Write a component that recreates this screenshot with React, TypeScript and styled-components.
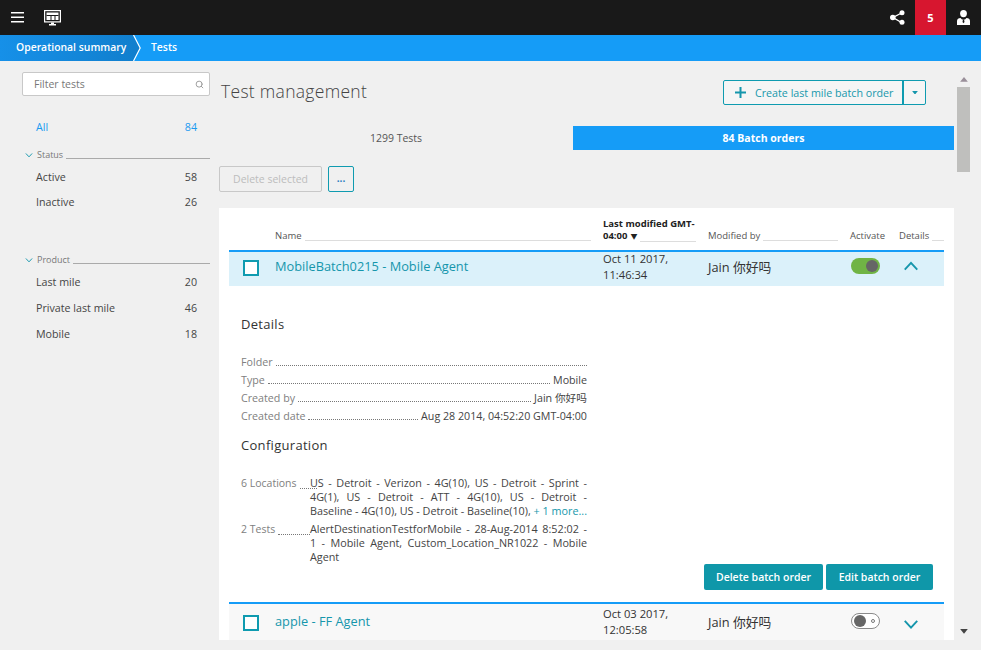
import styled, { createGlobalStyle } from "styled-components";
import { Search } from "lucide-react";

const FONT = `"Open Sans", "Noto Sans CJK SC", sans-serif`;
const COLS = "46px 328px 105px 142px 49px 45px";

const GlobalStyle = createGlobalStyle`
  html, body { margin: 0; padding: 0; background: #f0f0f0; }
  * { box-sizing: border-box; }
  body { font-family: ${FONT}; font-size: 11px; color: #333; }
`;

const Page = styled.div`
  width: 981px;
  height: 650px;
  overflow: hidden;
  display: flex;
  flex-direction: column;
`;

const TopBar = styled.header`
  height: 35px;
  flex: none;
  background: #191919;
  display: flex;
  align-items: center;
  padding-left: 11px;
  color: #fff;
`;

const MonitorSlot = styled.span`
  margin-left: 20px;
  display: flex;
`;

const TopRight = styled.div`
  margin-left: auto;
  display: flex;
  align-items: center;
  height: 100%;
`;

const ShareSlot = styled.span`
  display: flex;
  margin-right: 10px;
`;

const Badge = styled.div`
  width: 31px;
  height: 35px;
  background: #d7162f;
  display: flex;
  align-items: center;
  justify-content: center;
  font-size: 11px;
  font-weight: 700;
`;

const UserSlot = styled.span`
  width: 35px;
  display: flex;
  justify-content: center;
`;

const Crumbs = styled.nav`
  height: 26px;
  flex: none;
  background: #159cf7;
  display: flex;
  align-items: center;
  color: #fff;
  font-size: 10.4px;
  font-weight: 600;
`;

const CrumbCurrent = styled.div`
  height: 100%;
  display: flex;
  align-items: center;
  padding: 0 0 2px 16px;
  background: linear-gradient(90deg, #1690e8, #117fce);
  width: 133px;
`;

const CrumbLast = styled.span`
  margin: 0 0 2px 10px;
`;

const Body = styled.div`
  flex: 1;
  min-height: 0;
  display: flex;
`;

const Sidebar = styled.aside`
  width: 219px;
  flex: none;
  padding: 11px 9px 0 22px;
`;

const FilterBox = styled.div`
  height: 24px;
  background: #fff;
  border: 1px solid #c8c8c8;
  border-radius: 2px;
  display: flex;
  align-items: center;
  justify-content: space-between;
  padding: 0 5px 0 11px;
  color: #777;
  font-size: 10.5px;
`;

const FilterRow = styled.div<{ $active?: boolean; $tall?: boolean }>`
  display: flex;
  justify-content: space-between;
  align-items: center;
  height: ${(p) => (p.$tall ? "26px" : "25px")};
  padding: 0 13px 0 14px;
  font-size: 10.7px;
  color: ${(p) => (p.$active ? "#1a9bf0" : "#454545")};
`;

const AllGroup = styled.div`
  margin-top: 18px;
  margin-bottom: 8px;
`;

const GroupHead = styled.div`
  display: flex;
  align-items: flex-end;
  height: 14px;
  color: #787878;
  font-size: 9px;
  margin-bottom: 3px;
  svg {
    margin: 0 4px 3px 3px;
  }
`;

const GroupRule = styled.span`
  flex: 1;
  height: 1px;
  background: #aaa;
  margin: 0 0 2px 3px;
`;

const FilterGroup = styled.div`
  margin-bottom: 38px;
`;

const Main = styled.main`
  width: 735px;
  flex: none;
  display: flex;
  flex-direction: column;
`;

const TitleRow = styled.div`
  height: 65px;
  flex: none;
  display: flex;
  align-items: flex-start;
  justify-content: space-between;
  padding: 19px 28px 0 2px;
`;

const Title = styled.h1`
  margin: -1px 0 0;
  font-size: 17.5px;
  line-height: 24px;
  font-weight: 300;
  color: #444;
  letter-spacing: 0.3px;
`;

const SplitButton = styled.div`
  height: 25px;
  border: 1px solid #0f9bb0;
  border-radius: 2px;
  display: flex;
  align-items: center;
  color: #1798ac;
  font-size: 10.7px;
  background: #f5f5f5;
`;

const SplitMain = styled.div`
  width: 180px;
  height: 100%;
  display: flex;
  align-items: center;
  padding-left: 11px;
  gap: 9px;
  border-right: 2px solid #0f9bb0;
`;

const SplitCaret = styled.div`
  width: 21px;
  display: flex;
  justify-content: center;
`;

const Tabs = styled.div`
  display: flex;
  height: 24px;
  flex: none;
`;

const Tab = styled.div<{ $active?: boolean }>`
  width: ${(p) => (p.$active ? "381px" : "354px")};
  display: flex;
  align-items: center;
  justify-content: center;
  font-size: 10.5px;
  font-weight: ${(p) => (p.$active ? 700 : 400)};
  color: ${(p) => (p.$active ? "#fff" : "#555")};
  background: ${(p) => (p.$active ? "#159cf7" : "transparent")};
`;

const Actions = styled.div`
  display: flex;
  gap: 6px;
  margin: 16px 0;
  flex: none;
`;

const DisabledButton = styled.div`
  width: 103px;
  height: 26px;
  border: 1px solid #c8c8c8;
  border-radius: 2px;
  color: #bdbdbd;
  font-size: 10.5px;
  display: flex;
  align-items: center;
  justify-content: center;
`;

const MoreButton = styled.div`
  width: 26px;
  height: 26px;
  border: 1px solid #0f9bb0;
  border-radius: 2px;
  color: #2a7fc0;
  font-weight: 700;
  font-size: 10px;
  display: flex;
  align-items: center;
  justify-content: center;
  padding-bottom: 3px;
`;

const Card = styled.section`
  background: #fff;
  height: 432px;
  flex: none;
  padding: 0 10px;
  overflow: hidden;
`;

const HeadRow = styled.div`
  display: grid;
  grid-template-columns: ${COLS};
  height: 42px;
  padding-bottom: 8px;
  align-items: end;
`;

const HeadCell = styled.div<{ $gap?: string }>`
  display: flex;
  align-items: flex-end;
  font-size: 9.5px;
  line-height: 12px;
  color: #555;
  padding-right: ${(p) => p.$gap || "0"};
`;

const SortCell = styled.div`
  font-size: 9.5px;
  line-height: 12px;
  font-weight: 700;
  color: #222;
  padding-right: 12px;
  white-space: nowrap;
  margin-bottom: -1px;
  ${HeadCell} {
    color: #222;
  }
`;

const SortMark = styled.span`
  font-size: 7px;
  margin-left: 3px;
`;

const HeadLabel = styled.span`
  flex: none;
  white-space: nowrap;
`;

const HeadRule = styled.span`
  flex: 1;
  height: 1px;
  background: #ddd;
  margin: 0 0 1px 3px;
`;

const Row = styled.div<{ $open?: boolean }>`
  display: grid;
  grid-template-columns: ${COLS};
  grid-template-rows: minmax(0, 1fr);
  height: ${(p) => (p.$open ? "36px" : "38px")};
  align-items: center;
  border-top: 2px solid #159cf7;
  padding-bottom: ${(p) => (p.$open ? "6px" : "2px")};
  background: ${(p) => (p.$open ? "#dbf1fa" : "#f8f8f8")};
`;

const CheckBox = styled.span`
  width: 16px;
  height: 16px;
  border: 2px solid #0f9bb0;
  background: #fff;
  margin: 3px 0 0 14px;
`;

const RowName = styled.div`
  color: #1596ac;
  font-size: 12.8px;
  font-weight: 500;
`;

const RowDate = styled.div`
  font-size: 11.2px;
  line-height: 16.5px;
  font-weight: 500;
  color: #333;
  margin-top: 2px;
`;

const RowOwner = styled.div`
  font-size: 12.8px;
  color: #333;
  margin-top: 1px;
`;

const Toggle = styled.span<{ $on?: boolean }>`
  width: 29px;
  height: 16px;
  border-radius: 8px;
  display: flex;
  align-items: center;
  justify-content: ${(p) => (p.$on ? "flex-end" : "space-between")};
  padding: 0 2px;
  background: ${(p) => (p.$on ? "#70b445" : "#fff")};
  border: ${(p) => (p.$on ? "none" : "1px solid #8a8a8a")};
  margin-left: 1px;
`;

const Knob = styled.span`
  width: 12px;
  height: 12px;
  border-radius: 50%;
  background: #666;
`;

const OffDot = styled.span`
  width: 4px;
  height: 4px;
  border-radius: 50%;
  border: 1px solid #777;
  margin-right: 2px;
`;

const ChevronCell = styled.div<{ $drop?: boolean }>`
  display: flex;
  padding-left: 4px;
  margin-top: ${(p) => (p.$drop ? "8px" : "0")};
`;

const Panel = styled.div`
  height: 316px;
  padding: 29px 11px 0 12px;
  display: flex;
  flex-direction: column;
`;

const PanelColumn = styled.div`
  width: 346px;
`;

const SectionTitle = styled.h2`
  margin: 0;
  font-size: 13px;
  line-height: 18px;
  font-weight: 400;
  color: #333;
  letter-spacing: 0.3px;
`;

const DetailList = styled.div`
  margin: 20px 0 11px;
`;

const DetailRow = styled.div`
  display: flex;
  align-items: flex-end;
  height: 18px;
  line-height: 18px;
  font-size: 10.7px;
  color: #444;
`;

const DetailLabel = styled.span`
  color: #808080;
  flex: none;
`;

const DetailValue = styled.span`
  padding-left: 3px;
`;

const Leader = styled.span`
  flex: 1;
  border-bottom: 1px dotted #777;
  margin: 0 0 5px 3px;
`;

const ConfigList = styled.div`
  margin-top: 22px;
  display: flex;
  flex-direction: column;
  gap: 4px;
`;

const ConfigRow = styled.div`
  display: flex;
  font-size: 10.8px;
  line-height: 14px;
  color: #444;
`;

const ConfigLabel = styled.div`
  width: 69px;
  flex: none;
  display: flex;
  align-items: flex-start;
  font-size: 10.5px;
  color: #808080;
`;

const ConfigLeader = styled.span<{ $over?: boolean }>`
  flex: 1;
  height: 13px;
  border-bottom: 1px dotted #777;
  margin-left: 3px;
  margin-right: ${(p) => (p.$over ? "-7px" : "0")};
`;

const ConfigText = styled.div`
  flex: 1;
`;

const ConfigLine = styled.div<{ $last?: boolean }>`
  text-align: justify;
  text-align-last: ${(p) => (p.$last ? "left" : "justify")};
`;

const MoreLink = styled.span`
  color: #1798ac;
`;

const PanelButtons = styled.div`
  display: flex;
  justify-content: flex-end;
  gap: 3px;
  margin-top: auto;
  margin-bottom: 12px;
`;

const PrimaryButton = styled.div<{ $width: string }>`
  width: ${(p) => p.$width};
  height: 26px;
  background: #0f97a9;
  border-radius: 2px;
  color: #fff;
  font-size: 10.5px;
  font-weight: 600;
  display: flex;
  align-items: center;
  justify-content: center;
`;

const ScrollTrack = styled.div`
  width: 13px;
  flex: none;
  margin-left: 3px;
  margin-top: 16px;
  height: 557px;
  display: flex;
  flex-direction: column;
  align-items: center;
`;

const ScrollThumb = styled.div`
  width: 13px;
  height: 85px;
  background: #bfbfbd;
  margin-top: 5px;
`;

const ScrollDown = styled.div`
  margin-top: auto;
  display: flex;
`;

const Arrow = ({ up, color, size = 8 }: { up?: boolean; color: string; size?: number }) => (
  <svg width={size} height={size * 0.6} viewBox="0 0 8 5">
    <path d={up ? "M0 5 4 0 8 5Z" : "M0 0 8 0 4 5Z"} fill={color} />
  </svg>
);

const Chevron = ({ up, size = 16 }: { up?: boolean; size?: number }) => (
  <svg width={size} height={size * 0.6} viewBox="0 0 16 10">
    <path
      d={up ? "M1.5 9 8 2l6.5 7" : "M1.5 1 8 8l6.5-7"}
      fill="none"
      stroke="#1596ac"
      strokeWidth="2"
    />
  </svg>
);

const MenuIcon = () => (
  <svg width="13" height="13" viewBox="0 0 13 13">
    <path d="M0 1h13v1.600H0zM0 5.500h13v1.600H0zM0 10h13v1.600H0z" fill="#fff" />
  </svg>
);

const MonitorIcon = () => (
  <svg width="17" height="16" viewBox="0 0 17 16">
    <path d="M0 0h17v12.500H0z" fill="#fff" />
    <path d="M1.200 1.200h14.600v10.100H1.200z" fill="#191919" />
    <path d="M2.500 2.500h12v7.500h-12z" fill="#fff" />
    <path d="M2.500 5h12v1h-12zM6.500 5h1v5h-1zM10.500 5h1v5h-1z" fill="#191919" />
    <path d="M7 12.500h3V14h2v1.500H5V14h2z" fill="#fff" />
  </svg>
);

const ShareIcon = () => (
  <svg width="15" height="15" viewBox="0 0 15 15">
    <path d="M11.500 3 3 7.500l8.500 5" fill="none" stroke="#fff" strokeWidth="1.400" />
    <circle cx="12" cy="2.800" r="2.500" fill="#fff" />
    <circle cx="2.800" cy="7.500" r="2.800" fill="#fff" />
    <circle cx="12" cy="12.200" r="2.500" fill="#fff" />
  </svg>
);

const UserIcon = () => (
  <svg width="13" height="15" viewBox="0 0 13 15">
    <ellipse cx="6.500" cy="3.600" rx="3.400" ry="3.600" fill="#fff" />
    <path d="M0 15v-4c0-2 1.500-3 3.500-3L5 9.500h3L9.500 8c2 0 3.500 1 3.500 3v4z" fill="#fff" />
    <path d="M6 9.500h1l.5 2.500-1 1.200-1-1.200z" fill="#191919" />
  </svg>
);

const CrumbArrow = () => (
  <svg width="8" height="26" viewBox="0 0 8 26">
    <path d="M0 0 7 13 0 26Z" fill="#117fce" />
    <path d="M0.500 0 7.200 13 0.500 26" fill="none" stroke="#fff" strokeWidth="1.200" />
  </svg>
);

const PlusIcon = () => (
  <svg width="11" height="11" viewBox="0 0 11 11">
    <path d="M4.500 0h2v4.500h4.500v2H6.500V11h-2V6.500H0v-2h4.500z" fill="#1596ac" />
  </svg>
);

const statusFilters = [
  { label: "Active", count: 58 },
  { label: "Inactive", count: 26 },
];

const productFilters = [
  { label: "Last mile", count: 20 },
  { label: "Private last mile", count: 46 },
  { label: "Mobile", count: 18 },
];

const details = [
  { label: "Folder", value: "" },
  { label: "Type", value: "Mobile" },
  { label: "Created by", value: "Jain 你好吗" },
  { label: "Created date", value: "Aug 28 2014, 04:52:20 GMT-04:00" },
];

const App = () => {
  return (
    <Page>
      <GlobalStyle />
      <TopBar>
        <MenuIcon />
        <MonitorSlot>
          <MonitorIcon />
        </MonitorSlot>
        <TopRight>
          <ShareSlot>
            <ShareIcon />
          </ShareSlot>
          <Badge>5</Badge>
          <UserSlot>
            <UserIcon />
          </UserSlot>
        </TopRight>
      </TopBar>
      <Crumbs>
        <CrumbCurrent>Operational summary</CrumbCurrent>
        <CrumbArrow />
        <CrumbLast>Tests</CrumbLast>
      </Crumbs>
      <Body>
        <Sidebar>
          <FilterBox>
            Filter tests
            <Search size={9} color="#999" strokeWidth={2.5} />
          </FilterBox>
          <AllGroup>
            <FilterRow $active>
              <span>All</span>
              <span>84</span>
            </FilterRow>
          </AllGroup>
          <FilterGroup>
            <GroupHead>
              <Chevron size={8} />
              Status
              <GroupRule />
            </GroupHead>
            {statusFilters.map((f) => (
              <FilterRow key={f.label}>
                <span>{f.label}</span>
                <span>{f.count}</span>
              </FilterRow>
            ))}
          </FilterGroup>
          <FilterGroup>
            <GroupHead>
              <Chevron size={8} />
              Product
              <GroupRule />
            </GroupHead>
            {productFilters.map((f) => (
              <FilterRow key={f.label} $tall>
                <span>{f.label}</span>
                <span>{f.count}</span>
              </FilterRow>
            ))}
          </FilterGroup>
        </Sidebar>
        <Main>
          <TitleRow>
            <Title>Test management</Title>
            <SplitButton>
              <SplitMain>
                <PlusIcon />
                Create last mile batch order
              </SplitMain>
              <SplitCaret>
                <Arrow color="#1596ac" size={6} />
              </SplitCaret>
            </SplitButton>
          </TitleRow>
          <Tabs>
            <Tab>1299 Tests</Tab>
            <Tab $active>84 Batch orders</Tab>
          </Tabs>
          <Actions>
            <DisabledButton>Delete selected</DisabledButton>
            <MoreButton>...</MoreButton>
          </Actions>
          <Card>
            <HeadRow>
              <span />
              <HeadCell $gap="12px">
                <HeadLabel>Name</HeadLabel>
                <HeadRule />
              </HeadCell>
              <SortCell>
                Last modified GMT-
                <HeadCell>
                  <HeadLabel>
                    04:00<SortMark>▼</SortMark>
                  </HeadLabel>
                  <HeadRule />
                </HeadCell>
              </SortCell>
              <HeadCell $gap="12px">
                <HeadLabel>Modified by</HeadLabel>
                <HeadRule />
              </HeadCell>
              <HeadCell>
                <HeadLabel>Activate</HeadLabel>
              </HeadCell>
              <HeadCell>
                <HeadLabel>Details</HeadLabel>
                <HeadRule />
              </HeadCell>
            </HeadRow>
            <Row $open>
              <CheckBox />
              <RowName>MobileBatch0215 - Mobile Agent</RowName>
              <RowDate>
                Oct 11 2017,
                <br />
                11:46:34
              </RowDate>
              <RowOwner>Jain 你好吗</RowOwner>
              <Toggle $on>
                <Knob />
              </Toggle>
              <ChevronCell>
                <Chevron up />
              </ChevronCell>
            </Row>
            <Panel>
              <PanelColumn>
                <SectionTitle>Details</SectionTitle>
                <DetailList>
                  {details.map((d) => (
                    <DetailRow key={d.label}>
                      <DetailLabel>{d.label}</DetailLabel>
                      <Leader />
                      {d.value && <DetailValue>{d.value}</DetailValue>}
                    </DetailRow>
                  ))}
                </DetailList>
                <SectionTitle>Configuration</SectionTitle>
                <ConfigList>
                  <ConfigRow>
                    <ConfigLabel>
                      6 Locations
                      <ConfigLeader $over />
                    </ConfigLabel>
                    <ConfigText>
                      <ConfigLine>US - Detroit - Verizon - 4G(10), US - Detroit - Sprint -</ConfigLine>
                      <ConfigLine>4G(1), US - Detroit - ATT - 4G(10), US - Detroit -</ConfigLine>
                      <ConfigLine>
                        Baseline - 4G(10), US - Detroit - Baseline(10), <MoreLink>+ 1 more...</MoreLink>
                      </ConfigLine>
                    </ConfigText>
                  </ConfigRow>
                  <ConfigRow>
                    <ConfigLabel>
                      2 Tests
                      <ConfigLeader />
                    </ConfigLabel>
                    <ConfigText>
                      <ConfigLine>AlertDestinationTestforMobile - 28-Aug-2014 8:52:02 -</ConfigLine>
                      <ConfigLine>1 - Mobile Agent, Custom_Location_NR1022 - Mobile</ConfigLine>
                      <ConfigLine $last>Agent</ConfigLine>
                    </ConfigText>
                  </ConfigRow>
                </ConfigList>
              </PanelColumn>
              <PanelButtons>
                <PrimaryButton $width="119px">Delete batch order</PrimaryButton>
                <PrimaryButton $width="107px">Edit batch order</PrimaryButton>
              </PanelButtons>
            </Panel>
            <Row>
              <CheckBox />
              <RowName>apple - FF Agent</RowName>
              <RowDate>
                Oct 03 2017,
                <br />
                12:05:58
              </RowDate>
              <RowOwner>Jain 你好吗</RowOwner>
              <Toggle>
                <Knob />
                <OffDot />
              </Toggle>
              <ChevronCell $drop>
                <Chevron />
              </ChevronCell>
            </Row>
          </Card>
        </Main>
        <ScrollTrack>
          <Arrow up color="#9a8f9a" />
          <ScrollThumb />
          <ScrollDown>
            <Arrow color="#444" />
          </ScrollDown>
        </ScrollTrack>
      </Body>
    </Page>
  );
};

export default App;
